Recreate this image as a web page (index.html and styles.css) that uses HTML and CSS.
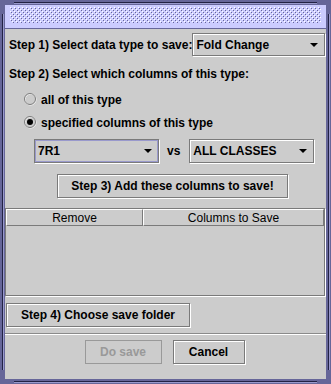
FILE: index.html
```html
<!DOCTYPE html>
<html lang="en">
<head>
    <meta charset="UTF-8">
    <title>Save Columns</title>
    <link rel="stylesheet" href="styles.css">
</head>
<body>
    <div class="frame">
        <div class="title-bar">
            <svg class="bumps" width="311" height="16">
                <defs>
                    <pattern id="bump" width="4" height="4" patternUnits="userSpaceOnUse">
                        <rect x="0" y="0" width="1" height="1" fill="#ffffff"/>
                        <rect x="1" y="1" width="1" height="1" fill="#666699"/>
                        <rect x="2" y="2" width="1" height="1" fill="#ffffff"/>
                        <rect x="3" y="3" width="1" height="1" fill="#666699"/>
                    </pattern>
                </defs>
                <rect width="311" height="16" fill="url(#bump)"/>
            </svg>
        </div>

        <div class="content">
            <div class="row-type">
                <span class="label">Step 1) Select data type to save:</span>
                <div class="combo combo-type">
                    <span>Fold Change</span>
                    <svg class="arrow" width="8" height="4"><polygon points="0,0 8,0 4,4" fill="#000"/></svg>
                </div>
            </div>

            <div class="label step2">Step 2) Select which columns of this type:</div>

            <div class="radio-row">
                <svg class="radio" width="13" height="13">
                    <circle cx="6.5" cy="6.5" r="5.5" fill="none" stroke="#ffffff"/>
                    <circle cx="6" cy="6" r="5.5" fill="none" stroke="#7a7a7a"/>
                </svg>
                <span class="label">all of this type</span>
            </div>
            <div class="radio-row">
                <svg class="radio" width="13" height="13">
                    <circle cx="6.5" cy="6.5" r="5.5" fill="none" stroke="#ffffff"/>
                    <circle cx="6" cy="6" r="5.5" fill="none" stroke="#7a7a7a"/>
                    <circle cx="6" cy="6" r="3" fill="#000"/>
                </svg>
                <span class="label">specified columns of this type</span>
            </div>

            <div class="row-columns">
                <div class="combo combo-col focused">
                    <span>7R1</span>
                    <svg class="arrow" width="8" height="4"><polygon points="0,0 8,0 4,4" fill="#000"/></svg>
                </div>
                <span class="label vs">vs</span>
                <div class="combo combo-col">
                    <span>ALL CLASSES</span>
                    <svg class="arrow" width="8" height="4"><polygon points="0,0 8,0 4,4" fill="#000"/></svg>
                </div>
            </div>

            <div class="center-row">
                <div class="button step3">Step 3) Add these columns to save!</div>
            </div>

            <div class="scroll-pane">
                <div class="table-header">
                    <div class="th th-remove">Remove</div>
                    <div class="th th-cols">Columns to Save</div>
                </div>
                <div class="table-body"></div>
            </div>

            <div class="button step4">Step 4) Choose save folder</div>

            <div class="separator"></div>

            <div class="actions">
                <div class="button disabled save">Do save</div>
                <div class="button cancel">Cancel</div>
            </div>
        </div>
    </div>
</body>
</html>
```

FILE: styles.css
```css
body {
    margin: 0;
    font-family: "Liberation Sans", Arial, sans-serif;
    font-size: 12px;
    color: #000;
}
.frame {
    position: relative;
    width: 331px;
    height: 384px;
    box-sizing: border-box;
    padding: 5px;
    background: #666699;
    display: flex;
    flex-direction: column;
}
/* long highlight / shadow lines of the frame border */
.frame::before {
    content: "";
    position: absolute;
    top: 2px;
    bottom: 1px;
    left: 14px;
    right: 14px;
    border-top: 1px solid #222244;
    border-bottom: 1px solid #9999cc;
    box-shadow: inset 0 1px #9999cc, inset 0 -1px #222244;
}
.frame::after {
    content: "";
    position: absolute;
    left: 2px;
    right: 1px;
    top: 14px;
    bottom: 14px;
    border-left: 1px solid #222244;
    border-right: 1px solid #9999cc;
    box-shadow: inset 1px 0 #9999cc, inset -1px 0 #222244;
}
.title-bar {
    height: 23px;
    background: #ccccff;
    border-bottom: 1px solid #666699;
    padding: 2px 0 0 5px;
    box-sizing: border-box;
    height: 24px;
}
.bumps {
    display: block;
}
.content {
    flex: 1;
    background: #cccccc;
    display: flex;
    flex-direction: column;
}
.label {
    font-weight: bold;
    line-height: 14px;
    white-space: nowrap;
}
.row-type {
    display: flex;
    align-items: center;
    margin-top: 4px;
    padding-left: 4px;
}
.combo {
    display: flex;
    align-items: center;
    justify-content: space-between;
    box-sizing: border-box;
    height: 23px;
    border: 1px solid #7a7a7a;
    box-shadow: inset 1px 1px #ffffff, 1px 1px #ffffff;
    padding: 0 6px 0 3px;
    font-weight: bold;
}
.combo.focused {
    box-shadow: inset 0 0 0 1px #9999cc, 1px 1px #ffffff;
}
.arrow {
    display: block;
}
.combo-type {
    width: 135px;
    margin-left: auto;
    margin-right: 1px;
}
.step2 {
    margin-top: 11px;
    padding-left: 4px;
}
.radio-row {
    display: flex;
    align-items: center;
    height: 23px;
    padding-left: 19px;
    gap: 4px;
}
.radio-row:first-of-type {
    margin-top: 7px;
}
.step2 + .radio-row {
    margin-top: 7px;
}
.radio {
    display: block;
}
.row-columns {
    display: flex;
    align-items: center;
    margin-top: 5px;
    padding-left: 29px;
}
.combo-col {
    width: 125px;
    height: 24px;
}
.vs {
    margin: 0 9px 0 8px;
}
.center-row {
    display: flex;
    margin-top: 11px;
    padding-left: 52px;
}
.button {
    box-sizing: border-box;
    height: 24px;
    border: 1px solid #7a7a7a;
    box-shadow: inset 1px 1px #ffffff, 1px 1px #ffffff;
    display: flex;
    align-items: center;
    justify-content: center;
    font-weight: bold;
    white-space: nowrap;
}
.step3 {
    width: 231px;
}
.scroll-pane {
    margin-top: 10px;
    height: 88px;
    box-sizing: border-box;
    border: 1px solid #7a7a7a;
    box-shadow: 1px 1px #ffffff;
    width: 320px;
    display: flex;
    flex-direction: column;
}
.table-header {
    display: flex;
    height: 17px;
}
.th {
    box-sizing: border-box;
    border-top: 1px solid #ffffff;
    border-left: 1px solid #ffffff;
    border-right: 1px solid #7a7a7a;
    border-bottom: 1px solid #7a7a7a;
    display: flex;
    align-items: center;
    justify-content: center;
    line-height: 14px;
}
.th-remove {
    width: 137px;
}
.th-cols {
    width: 181px;
}
.table-body {
    flex: 1;
}
.step4 {
    margin-top: 7px;
    margin-left: 1px;
    width: 184px;
}
.separator {
    margin-top: 6px;
    border-top: 1px solid #8a8a8a;
    border-bottom: 1px solid #ffffff;
}
.actions {
    display: flex;
    justify-content: center;
    gap: 11px;
    margin-top: 5px;
    padding-right: 2px;
}
.save {
    width: 77px;
}
.cancel {
    width: 72px;
}
.disabled {
    color: #999999;
    border-color: #999999;
    box-shadow: none;
}
```
